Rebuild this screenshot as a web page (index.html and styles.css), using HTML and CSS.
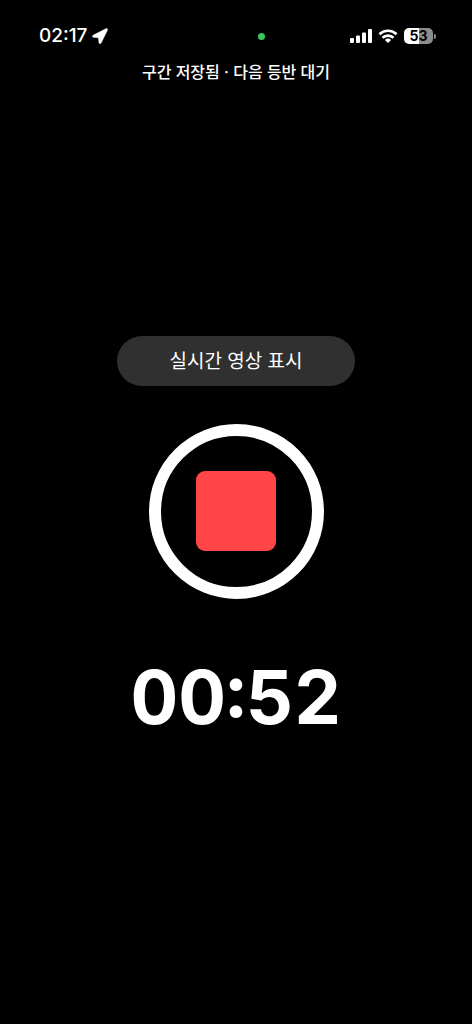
FILE: index.html
```html
<!DOCTYPE html>
<html lang="ko">
<head>
<meta charset="utf-8">
<meta name="viewport" content="width=device-width, initial-scale=1">
<title>등반 녹화</title>
<link rel="stylesheet" href="styles.css">
</head>
<body>
<div class="screen">
  <header class="status-bar">
    <div class="status-left">
      <time class="clock">02:17</time>
      <svg class="location" width="16" height="16" viewBox="0 0 16 16" aria-hidden="true"><path d="M13.8.8 1.1 7.2C.2 7.7.4 9.2 1.5 9.3l4.9.5.6 4.9c.1 1.2 1.5 1.4 2.1.4L15.4 2.2C16 1 15 .2 13.8.8Z" fill="#fff" stroke="#fff" stroke-width=".5"/></svg>
    </div>
    <span class="camera-dot"></span>
    <div class="status-right">
      <svg width="22" height="14" viewBox="0 0 22 14" aria-hidden="true"><g fill="#fff"><rect x="0" y="9" width="4" height="5" rx="1"/><rect x="6" y="6.5" width="4" height="7.5" rx="1"/><rect x="12" y="3.5" width="4" height="10.5" rx="1"/><rect x="18" y="0" width="4" height="14" rx="1"/></g></svg>
      <svg width="20" height="14" viewBox="0 0 20 14" aria-hidden="true"><g fill="none" stroke="#fff" stroke-width="2.7"><path d="M1.4 5.2a12.4 12.4 0 0 1 17.2 0"/><path d="M4.5 8.8a7.9 7.9 0 0 1 11 0"/></g><path d="M10 14 6.9 10.9a4.5 4.5 0 0 1 6.2 0Z" fill="#fff"/></svg>
      <div class="battery"><span class="battery-level">53</span><span class="battery-tip"></span></div>
    </div>
  </header>
  <p class="message">구간 저장됨 · 다음 등반 대기</p>
  <main class="recorder">
    <button class="preview-button" type="button">실시간 영상 표시</button>
    <button class="stop-button" type="button" aria-label="녹화 중지"><span class="stop-mark"></span></button>
    <time class="timer">00:52</time>
  </main>
</div>
</body>
</html>
```
FILE: styles.css
```css
* {
  box-sizing: border-box;
}

body {
  margin: 0;
  background: #000;
  color: #fff;
  font-family: Inter, "Noto Sans CJK KR", sans-serif;
}

.screen {
  display: flex;
  flex-direction: column;
  min-height: 100vh;
}

.status-bar {
  display: grid;
  grid-template-columns: 1fr 8px 1fr;
  align-items: center;
  height: 24px;
  margin-top: 24px;
  padding: 0 36px 0 39px;
  column-gap: 22px;
}

.status-left,
.status-right {
  display: flex;
  align-items: center;
}

.status-left {
  gap: 5px;
}

.status-right {
  justify-content: flex-end;
  gap: 6px;
}

.clock {
  font-size: 19px;
  font-weight: 500;
  line-height: 24px;
}

.camera-dot {
  width: 7px;
  height: 7px;
  margin-left: 24px;
  border-radius: 50%;
  background: #34c759;
}

.battery {
  display: flex;
  align-items: center;
  gap: 1px;
}

.battery-level {
  width: 29px;
  height: 16px;
  border-radius: 5px;
  background: linear-gradient(90deg, #fff 53%, #8c8c8c 53%);
  color: #000;
  font-size: 14px;
  font-weight: 700;
  line-height: 16px;
  text-align: center;
}

.battery-tip {
  width: 2px;
  height: 5px;
  border-radius: 0 2px 2px 0;
  background: #8c8c8c;
}

.message {
  margin: 12px 0 0;
  font-size: 16px;
  font-weight: 500;
  line-height: 24px;
  text-align: center;
}

.recorder {
  display: flex;
  flex: 1;
  flex-direction: column;
  align-items: center;
  justify-content: center;
  padding-bottom: 32px;
}

.preview-button {
  width: 238px;
  height: 50px;
  padding: 2px 0 0;
  border: 0;
  border-radius: 25px;
  background: #303030;
  color: #fff;
  font-family: inherit;
  font-size: 19px;
  font-weight: 400;
  line-height: 30px;
}

.stop-button {
  display: grid;
  place-items: center;
  width: 175px;
  height: 175px;
  margin-top: 38px;
  padding: 0;
  border: 12px solid #fff;
  border-radius: 50%;
  background: transparent;
}

.stop-mark {
  width: 80px;
  height: 80px;
  border-radius: 9px;
  background: #ff4548;
}

.timer {
  margin-top: 54px;
  font-size: 74px;
  font-weight: 700;
  line-height: 88px;
  font-variant-numeric: tabular-nums;
}
```
